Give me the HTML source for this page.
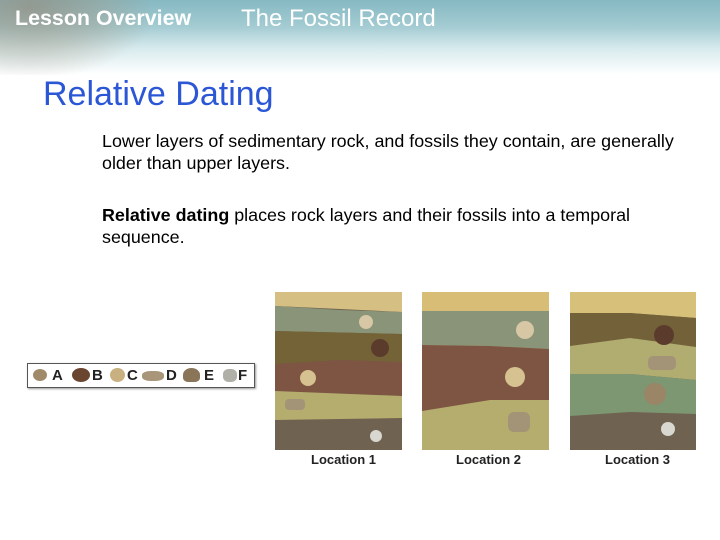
<!DOCTYPE html>
<html><head><style>
body{margin:0;width:720px;height:540px;overflow:hidden;background:#fff;font-family:"Liberation Sans",sans-serif;position:relative}
.hdr{position:absolute;left:0;top:0;width:720px;height:75px;background:linear-gradient(#86b9c3 0%,#a3cbd2 35%,#d8ebee 65%,#fff 100%)}
.corner{position:absolute;left:0;top:0;width:150px;height:75px;background:radial-gradient(ellipse at 20% 10%,rgba(150,130,110,.6) 0%,rgba(160,150,130,.35) 45%,rgba(255,255,255,0) 75%)}
.t{position:absolute;color:#fff;font-size:24px;top:5px}
h1{position:absolute;left:43px;top:75px;margin:0;font-size:34px;font-weight:normal;color:#2b57d6}
p{position:absolute;left:102px;margin:0;font-size:17.9px;line-height:22px;color:#000}
.lab{position:absolute;top:452px;font-size:13px;font-weight:bold;color:#222}
</style></head><body>
<div class="hdr"></div><div class="corner"></div>
<div class="t" style="left:15px;font-weight:bold;font-size:21px;top:7px;transform:scaleX(1.02);transform-origin:left">Lesson Overview</div>
<div class="t" style="left:241px">The Fossil Record</div>
<h1>Relative Dating</h1>
<p style="top:130px;width:590px">Lower layers of sedimentary rock, and fossils they contain, are generally older than upper layers.</p>
<p style="top:204px;width:590px"><b>Relative dating</b> places rock layers and their fossils into a temporal sequence.</p>
<div style="position:absolute;left:27px;top:363px;width:226px;height:23px;border:1px solid #555;box-shadow:1px 1px 2px #999;background:#fff;font-weight:bold;font-size:15px;line-height:23px;color:#222">
<span style="position:absolute;left:5px;top:5px;width:14px;height:12px;border-radius:50%;background:#a08a6a"></span><span style="position:absolute;left:24px">A</span>
<span style="position:absolute;left:44px;top:4px;width:18px;height:14px;border-radius:50%;background:#6a4530"></span><span style="position:absolute;left:64px">B</span>
<span style="position:absolute;left:82px;top:4px;width:15px;height:14px;border-radius:50%;background:#c8b080"></span><span style="position:absolute;left:99px">C</span>
<span style="position:absolute;left:114px;top:7px;width:22px;height:10px;border-radius:40%;background:#a8957a"></span><span style="position:absolute;left:138px">D</span>
<span style="position:absolute;left:155px;top:4px;width:17px;height:14px;border-radius:50% 50% 30% 30%;background:#8a7558"></span><span style="position:absolute;left:176px">E</span>
<span style="position:absolute;left:195px;top:5px;width:14px;height:13px;border-radius:40%;background:#b0b0a8"></span><span style="position:absolute;left:210px">F</span>
</div>
<svg style="position:absolute;left:0;top:0" width="720" height="540">
<g>
<rect x="275" y="292" width="127" height="158" fill="#6f6250"/>
<polygon points="275,292 402,292 402,312 340,309 275,306" fill="#d6bf82"/>
<polygon points="275,306 340,310 402,312 402,334 275,331" fill="#8a9478"/>
<polygon points="275,331 402,334 402,362 340,360 275,364" fill="#746337"/>
<polygon points="275,364 340,360 402,362 402,396 275,391" fill="#7e5443"/>
<polygon points="275,391 402,396 402,418 340,419 275,420" fill="#b4ad6e"/>
<circle cx="366" cy="322" r="7" fill="#d7c7a4"/><circle cx="380" cy="348" r="9" fill="#5b3c2c"/>
<circle cx="308" cy="378" r="8" fill="#d6c290"/><rect x="285" y="399" width="20" height="11" rx="4" fill="#a39478"/>
<circle cx="376" cy="436" r="6" fill="#d8d8d0"/>
</g>
<g>
<rect x="422" y="292" width="127" height="158" fill="#b4ad6e"/>
<polygon points="422,292 549,292 549,311 422,311" fill="#d8bd76"/>
<polygon points="422,311 549,311 549,349 490,346 422,345" fill="#8a9478"/>
<polygon points="422,345 490,346 549,349 549,400 490,400 422,411" fill="#7e5443"/>
<circle cx="525" cy="330" r="9" fill="#d7c7a4"/><circle cx="515" cy="377" r="10" fill="#d6c290"/>
<rect x="508" y="412" width="22" height="20" rx="6" fill="#a39478"/>
</g>
<g>
<rect x="570" y="292" width="126" height="158" fill="#6f6250"/>
<polygon points="570,292 696,292 696,318 630,313 570,313" fill="#d6c07a"/>
<polygon points="570,313 630,313 696,318 696,347 630,338 570,346" fill="#736239"/>
<polygon points="570,346 630,338 696,347 696,380 630,374 570,374" fill="#b1ac70"/>
<polygon points="570,374 630,374 696,380 696,414 630,412 570,416" fill="#7d9772"/>
<circle cx="664" cy="335" r="10" fill="#5b3c2c"/><rect x="648" y="356" width="28" height="14" rx="5" fill="#a39478"/>
<circle cx="655" cy="394" r="11" fill="#9a8566"/><circle cx="668" cy="429" r="7" fill="#d8d8d0"/>
</g>
</svg>
<div class="lab" style="left:311px">Location 1</div>
<div class="lab" style="left:456px">Location 2</div>
<div class="lab" style="left:605px">Location 3</div>
</body></html>
